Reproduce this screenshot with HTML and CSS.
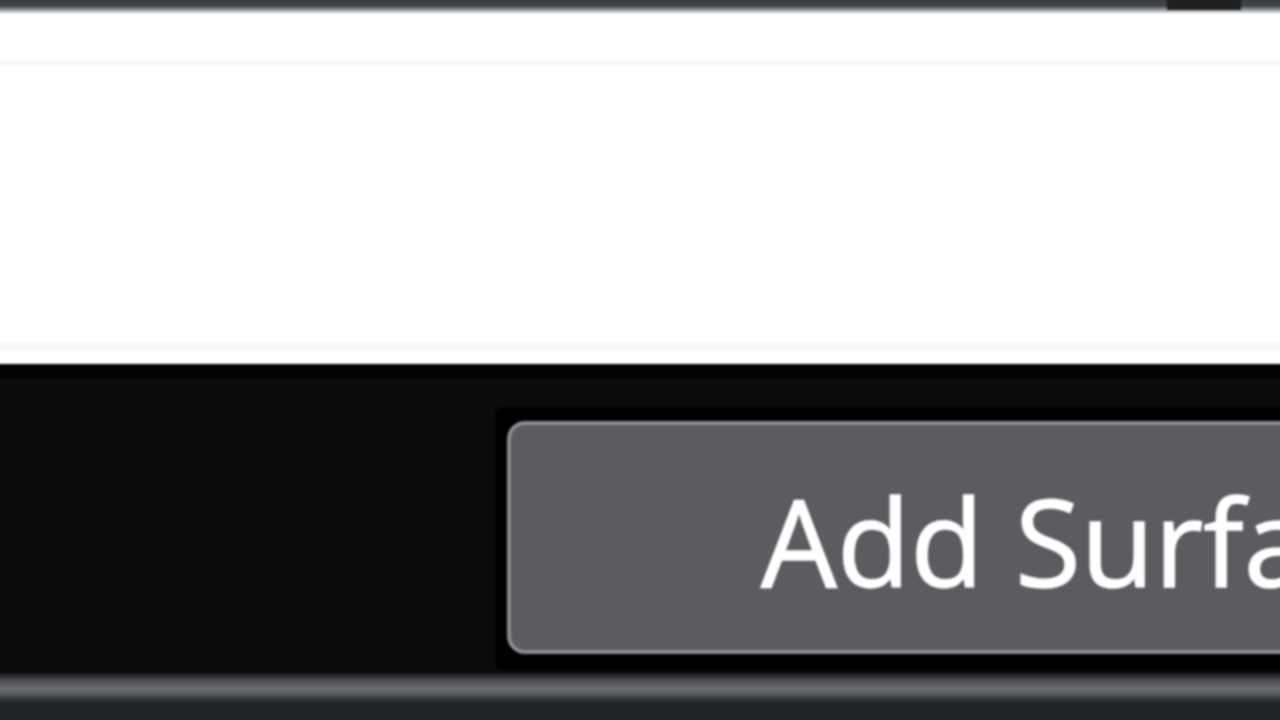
FILE: index.html
```html
<!DOCTYPE html>
<html lang="en">
<head>
<meta charset="utf-8">
<title>Add Surface</title>
<link rel="stylesheet" href="styles.css">
</head>
<body>
<div class="page">
  <div class="titlebar"><div class="titlebar-block"></div></div>
  <div class="canvas">
    <div class="canvas-line top-line"></div>
    <div class="canvas-fill"></div>
    <div class="canvas-line bottom-line"></div>
  </div>
  <div class="toolbar">
    <div class="well">
      <button class="btn" type="button"><span class="btn-label">Add Surface</span></button>
    </div>
  </div>
  <div class="status"></div>
</div>
</body>
</html>
```

FILE: styles.css
```css
html, body {
  margin: 0;
  padding: 0;
  width: 1280px;
  height: 720px;
  overflow: hidden;
  background: #0b0b0b;
}

.page {
  width: 1300px;
  height: 740px;
  margin: -10px 0 0 -10px;
  display: flex;
  flex-direction: column;
  filter: blur(1.2px);
}

.titlebar {
  height: 24px;
  flex: none;
  display: flex;
  justify-content: flex-end;
  padding-right: 49px;
  background: linear-gradient(to bottom, #3a3e42 0px, #3a3e42 10px, #40444a 16px, #9a9c9e 20px, #ffffff 24px);
}

.titlebar-block {
  width: 74px;
  height: 20px;
  background: #1d1f21;
}

.canvas {
  height: 350px;
  flex: none;
  display: flex;
  flex-direction: column;
  background: #ffffff;
}

.canvas-line {
  height: 6px;
  background: #f9f9f9;
  flex: none;
}

.top-line {
  margin-top: 46px;
}

.canvas-fill {
  flex: 1;
}

.bottom-line {
  height: 8px;
  margin-bottom: 14px;
  background: #f8f8f8;
}

.toolbar {
  height: 308px;
  flex: none;
  box-sizing: border-box;
  border-top: 14px solid #020202;
  background: #0b0b0b;
  padding: 29px 0 2px 505px;
  display: flex;
  flex-direction: column;
}

.well {
  flex: 1;
  background: #000000;
  padding: 14px 0 16px 12px;
  display: flex;
  border-radius: 8px 0 0 8px;
}

.btn {
  flex: none;
  width: 1100px;
  height: 233px;
  box-sizing: border-box;
  margin: 0;
  border: 4px solid #8b8c8f;
  border-radius: 18px;
  background: #5b5c5f;
  display: flex;
  align-items: center;
  padding: 6px 0 0 250px;
  font-family: "Open Sans", "Noto Sans", sans-serif;
  font-size: 120px;
  color: #ffffff;
  -webkit-text-stroke: 1.5px #ffffff;
  text-align: left;
  white-space: nowrap;
}

.btn-label {
  line-height: normal;
}

.status {
  flex: 1;
  background: linear-gradient(to bottom, #0b0b0b 0px, #4a4b4e 8px, #6b6c70 17px, #5d5e62 22px, #2a2d31 28px, #1f2226 32px, #1f2226 100%);
}
```
